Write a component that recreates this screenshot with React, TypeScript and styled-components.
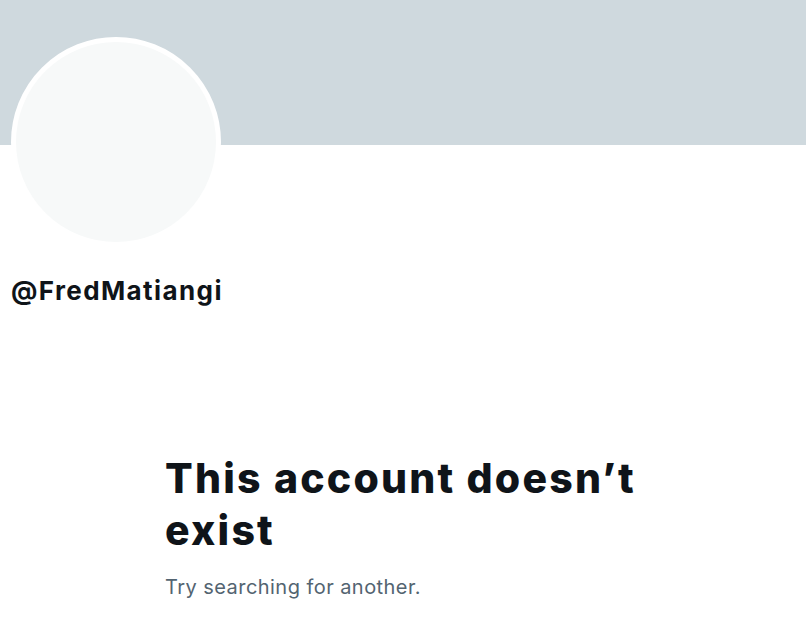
import React from 'react'
import styled, { createGlobalStyle } from 'styled-components'

const GlobalStyle = createGlobalStyle`
  body {
    margin: 0;
    background: #ffffff;
    font-family: Inter, "Noto Sans", sans-serif;
    color: #0f1419;
  }
`

function App() {
  return (
    <React.Fragment>
      <GlobalStyle />
      <Page>
        <Banner />
        <ProfileHeader>
          <Avatar />
          <Handle>@FredMatiangi</Handle>
        </ProfileHeader>
        <EmptyState>
          <Title>This account doesn’t exist</Title>
          <Subtitle>Try searching for another.</Subtitle>
        </EmptyState>
      </Page>
    </React.Fragment>
  )
}

const Page = styled.div`
  width: 806px;
  min-height: 644px;
  overflow: hidden;
`

const Banner = styled.div`
  height: 145px;
  background: #cfd9de;
`

const ProfileHeader = styled.div`
  padding: 0 11px;
  display: flex;
  flex-direction: column;
  align-items: flex-start;
`

const Avatar = styled.div`
  width: 200px;
  height: 200px;
  margin-top: -108.5px;
  border-radius: 50%;
  border: 5.5px solid #ffffff;
  background: #f7f9f9;
`

const Handle = styled.div`
  margin-top: 28.5px;
  font-size: 26px;
  line-height: 32px;
  font-weight: 700;
  letter-spacing: 1.4px;
`

const EmptyState = styled.div`
  width: 476px;
  margin: 145px auto 0;
`

const Title = styled.h1`
  margin: 0;
  font-size: 41px;
  line-height: 52px;
  font-weight: 800;
  letter-spacing: 2.2px;
  color: #0f1419;
`

const Subtitle = styled.p`
  margin: 18px 0 0;
  font-size: 20px;
  line-height: 26px;
  letter-spacing: 0.45px;
  color: #536471;
`

export default App
